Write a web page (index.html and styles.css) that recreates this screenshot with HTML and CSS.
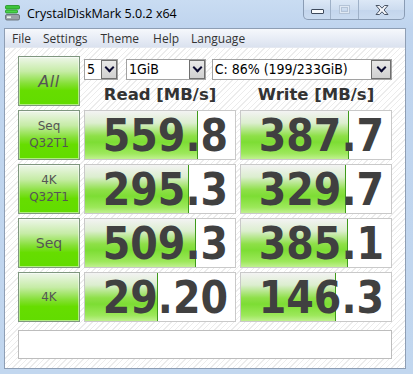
FILE: index.html
```html
<!DOCTYPE html>
<html>
<head>
<meta charset="utf-8">
<link rel="stylesheet" href="styles.css">
</head>
<body>
<div class="window">
  <div class="titlebar">
    <svg class="appicon" width="16" height="16" viewBox="0 0 16 16">
      <rect x="0.5" y="0.5" width="14" height="3.5" rx="1" fill="#3cc43c" stroke="#1f8f1f" stroke-width="0.8"/>
      <rect x="0.5" y="5" width="12" height="3" rx="1" fill="#4bd44b" stroke="#1f8f1f" stroke-width="0.8"/>
      <rect x="0.5" y="9.5" width="14" height="5.5" rx="1.5" fill="#9aa1a8" stroke="#5d646b" stroke-width="0.8"/>
      <rect x="2" y="11.3" width="4" height="1.8" fill="#e9f4e9"/>
    </svg>
    <span class="title">CrystalDiskMark 5.0.2 x64</span>
    <div class="caption-buttons">
      <div class="cbtn cmin"><span class="dash"></span></div>
      <div class="cbtn cmax"><span class="box"></span></div>
      <div class="cbtn cclose">
        <svg width="16" height="12" viewBox="0 0 16 12">
          <path d="M2 1.5 H5.5 L8 4.2 L10.5 1.5 H14 L10 6 L14 10.5 H10.5 L8 7.8 L5.5 10.5 H2 L6 6 Z" fill="#f4f6fa" stroke="#4a5566" stroke-width="1"/>
        </svg>
      </div>
    </div>
  </div>
  <div class="client">
    <div class="menubar">
      <span>File</span><span>Settings</span><span>Theme</span><span>Help</span><span>Language</span>
    </div>
    <div class="content">
      <div class="grid">
        <div class="label all">All</div>
        <div class="top">
          <div class="selects">
            <div class="select s-count"><span class="sval">5</span><span class="arrow"></span></div>
            <div class="select s-size"><span class="sval">1GiB</span><span class="arrow"></span></div>
            <div class="select s-drive"><span class="sval">C: 86% (199/233GiB)</span><span class="arrow"></span></div>
          </div>
          <div class="heads">
            <div class="head">Read [MB/s]</div>
            <div class="head">Write [MB/s]</div>
          </div>
        </div>

        <div class="label"><span>Seq</span><span>Q32T1</span></div>
        <div class="val"><div class="fill" style="width:112px"></div><span class="num">559.8</span></div>
        <div class="val"><div class="fill" style="width:107px"></div><span class="num">387.7</span></div>

        <div class="label"><span>4K</span><span>Q32T1</span></div>
        <div class="val"><div class="fill" style="width:103px"></div><span class="num">295.3</span></div>
        <div class="val"><div class="fill" style="width:104px"></div><span class="num">329.7</span></div>

        <div class="label"><span class="big">Seq</span></div>
        <div class="val"><div class="fill" style="width:110px"></div><span class="num">509.3</span></div>
        <div class="val"><div class="fill" style="width:106px"></div><span class="num">385.1</span></div>

        <div class="label"><span>4K</span></div>
        <div class="val"><div class="fill" style="width:72px"></div><span class="num">29.20</span></div>
        <div class="val"><div class="fill" style="width:94px"></div><span class="num">146.3</span></div>
      </div>
      <div class="comment"></div>
    </div>
  </div>
</div>
</body>
</html>
```

FILE: styles.css
```css
html, body {
  margin: 0;
  padding: 0;
}
body {
  width: 413px;
  height: 374px;
  overflow: hidden;
  background: linear-gradient(90deg, #9fb8d8 0px, #c4d8ef 3px, #c7dbf1 400px, #a9c2e0 406px, #2a3f66 408px, #7f9cc4 411px);
}
.window {
  width: 413px;
  height: 374px;
  display: flex;
  flex-direction: column;
  background: linear-gradient(180deg, #c9dcf2 0px, #bfd4ee 28px, #c2d7ef 374px);
  box-sizing: border-box;
}
.titlebar {
  height: 28px;
  display: flex;
  align-items: flex-start;
  padding-left: 5px;
  box-sizing: border-box;
}
.appicon {
  margin-top: 5px;
  display: block;
}
.title {
  margin-left: 6px;
  margin-top: 6px;
  font-family: "Open Sans", "Noto Sans", sans-serif;
  font-size: 12.5px;
  line-height: 16px;
  color: #000;
  letter-spacing: 0px;
}
.caption-buttons {
  margin-left: auto;
  margin-right: 8px;
  display: flex;
  height: 19px;
  border: 1px solid #8a9cb4;
  border-top: none;
  border-radius: 0 0 5px 5px;
  overflow: hidden;
  background: linear-gradient(180deg, #dce8f6 0%, #cddcef 50%, #c3d5ec 51%, #cadbf0 100%);
}
.cbtn {
  display: flex;
  align-items: center;
  justify-content: center;
  height: 19px;
}
.cmin { width: 26px; border-right: 1px solid #9fb1c8; }
.cmax { width: 27px; border-right: 1px solid #9fb1c8; }
.cclose { width: 45px; }
.dash {
  display: block;
  width: 11px;
  height: 3px;
  background: #f8fafc;
  border: 1px solid #3e4a5c;
  border-radius: 1px;
  margin-top: 4px;
}
.box {
  display: block;
  width: 9px;
  height: 7px;
  border: 1px solid #b4c3d6;
  box-shadow: inset 0 0 0 1px #dfe8f3, inset 0 0 0 2px #b4c3d6;
}
.client {
  margin-left: 4px;
  width: 402px;
  height: 341px;
  border: 1px solid #8e9eb4;
  box-sizing: border-box;
  display: flex;
  flex-direction: column;
  background: #fff;
}
.menubar {
  height: 18px;
  display: flex;
  align-items: center;
  padding-left: 7px;
  background: linear-gradient(180deg, #f6f8fc 0%, #e8edf6 50%, #dbe2ef 100%);
  font-family: "Open Sans", "Noto Sans", sans-serif;
  font-size: 12px;
  color: #333;
  border-bottom: 1px solid #e4e8f0;
}
.menubar span { margin-right: 12px; }
.menubar span:nth-child(2) { margin-right: 13px; }
.menubar span:nth-child(3) { margin-right: 14px; }
.content {
  flex: 1;
  padding: 8px 0 0 13px;
  background-color: #fdfdfd;
  background-image: repeating-linear-gradient(135deg, #ffffff 0px, #ffffff 3px, #ececec 3px, #ececec 4px);
}
.grid {
  display: grid;
  grid-template-columns: 62px 152px 152px;
  grid-template-rows: repeat(5, 50px);
  column-gap: 4px;
  row-gap: 4px;
}
.label {
  border: 1px solid #7f977f;
  box-sizing: border-box;
  background: linear-gradient(180deg, #eef6ea 0%, #c6eca6 30%, #86e038 55%, #66dd00 70%, #62dc00 100%);
  box-shadow: inset 0 0 0 1px rgba(255,255,255,0.5);
  display: flex;
  flex-direction: column;
  align-items: center;
  justify-content: center;
  font-family: "DejaVu Sans", sans-serif;
  font-size: 12px;
  line-height: 17px;
  color: #555;
}
.label .big { font-size: 14px; }
.label.all {
  font-size: 16px;
  font-style: italic;
  letter-spacing: 0.5px;
}
.top {
  grid-column: 2 / 4;
  display: flex;
  flex-direction: column;
}
.selects {
  display: flex;
  margin-top: 3px;
  height: 21px;
}
.select {
  box-sizing: border-box;
  height: 21px;
  border: 1px solid #a2a2a2;
  background: #fff;
  display: flex;
  align-items: stretch;
  font-family: "DejaVu Sans", sans-serif;
  font-stretch: condensed;
  font-size: 14px;
  color: #000;
}
.sval {
  flex: 1;
  padding-left: 2px;
  line-height: 19px;
  white-space: nowrap;
  overflow: hidden;
}
.arrow {
  width: 16px;
  border: 1px solid #6f6f6f;
  box-sizing: border-box;
  background: linear-gradient(180deg, #e8e8e8, #d0d0d0);
  position: relative;
}
.arrow::after {
  content: "";
  position: absolute;
  left: 4px;
  top: 3px;
  width: 5px;
  height: 5px;
  border-right: 2px solid #0a0a30;
  border-bottom: 2px solid #0a0a30;
  transform: rotate(45deg);
}
.s-count { width: 34px; }
.s-size { width: 80px; margin-left: 8px; }
.s-drive { width: 181px; margin-left: 6px; }
.s-drive .arrow { width: 20px; }
.s-drive .arrow::after { left: 6px; }
.heads {
  display: grid;
  grid-template-columns: 152px 152px;
  column-gap: 4px;
  margin-top: 5px;
}
.head {
  text-align: center;
  font-family: "DejaVu Sans", sans-serif;
  font-weight: bold;
  font-size: 16.5px;
  line-height: 20px;
  color: #333;
}
.val {
  position: relative;
  border: 1px solid #c9c9c9;
  box-sizing: border-box;
  background: #fff;
  display: flex;
  justify-content: flex-end;
  align-items: flex-end;
  overflow: hidden;
}
.fill {
  position: absolute;
  left: 0;
  top: 0;
  bottom: 0;
  background: linear-gradient(180deg, #f3f3f3 0%, #dceecf 25%, #8ee048 52%, #7ddd34 65%, #9ce85a 88%, #c0f090 100%);
  border-right: 1px solid #3e9a1a;
}
.num {
  position: relative;
  font-family: "DejaVu Sans", sans-serif;
  font-stretch: condensed;
  font-weight: bold;
  font-size: 44px;
  line-height: 44px;
  color: #404040;
  padding-right: 7px;
  margin-bottom: 1px;
}
.comment {
  margin-top: 8px;
  width: 374px;
  height: 29px;
  box-sizing: border-box;
  border: 1px solid #bdbdbd;
  background: #fff;
}
```
